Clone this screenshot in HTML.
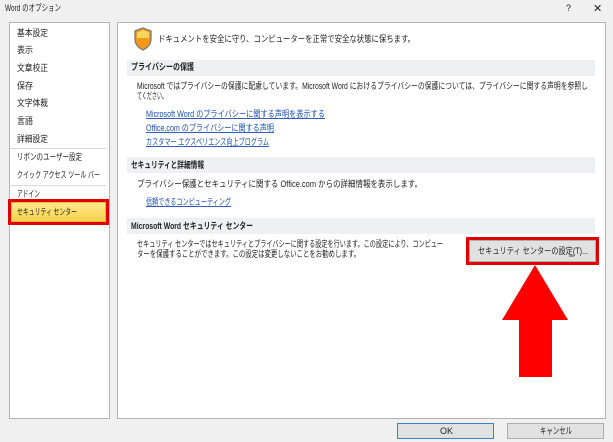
<!DOCTYPE html>
<html><head><meta charset="utf-8"><style>
*{margin:0;padding:0;box-sizing:border-box}
body{width:613px;height:442px;background:#f0f0f0;font-family:"Liberation Sans","Noto Sans CJK JP",sans-serif;position:relative;overflow:hidden}
.box{position:absolute}
svg text{font-family:"Liberation Sans","Noto Sans CJK JP",sans-serif;font-size:9px;fill:#222}
.l{fill:#1a4fb4;text-decoration:underline}
.b{font-weight:bold}
</style></head><body>
<div class="box" style="left:9px;top:22px;width:101px;height:397px;background:#fff;border:1px solid #b5b5b5"></div>
<div class="box" style="left:117px;top:22px;width:489px;height:397px;background:#fff;border:1px solid #b5b5b5"></div>
<div class="box" style="left:10px;top:148px;width:96px;height:1px;background:#d8d8d8"></div>
<div class="box" style="left:10px;top:185px;width:96px;height:1px;background:#d8d8d8"></div>
<div class="box" style="left:8px;top:199px;width:101px;height:26px;border:3px solid #e00000"></div>
<div class="box" style="left:11px;top:202px;width:95px;height:20px;background:linear-gradient(#fde98a,#f9d24a);border:1px solid #e6b840"></div>
<div class="box" style="left:127px;top:60px;width:468px;height:16px;background:#eef0f3"></div>
<div class="box" style="left:127px;top:157px;width:468px;height:16px;background:#eef0f3"></div>
<div class="box" style="left:127px;top:218px;width:468px;height:16px;background:#eef0f3"></div>
<div class="box" style="left:466px;top:237px;width:133px;height:28px;border:3px solid #e00000"></div>
<div class="box" style="left:469px;top:240px;width:127px;height:22px;background:#e1e1e1;border:1px solid #adadad"></div>
<div class="box" style="left:397px;top:423px;width:97px;height:16px;background:#e1e1e1;border:1px solid #3c7fd0"></div>
<div class="box" style="left:507px;top:423px;width:97px;height:16px;background:#e1e1e1;border:1px solid #adadad"></div>
<svg class="box" style="left:0;top:0" width="613" height="442">
<path d="M143 28 L151 31 L151 39 Q151 46 143 50 Q135 46 135 39 L135 31 Z" fill="#f39a1a" stroke="#7a7a7a" stroke-width="1.3"/>
<path d="M143 30 L149 32.5 L149 38 L137 38 L137 32.5Z" fill="#fbd55a"/>
<path d="M535 265 L568 320 L552 320 L552 377 L519 377 L519 320 L502 320 Z" fill="#ff0000"/>
<text x="5" y="11" textLength="56" lengthAdjust="spacingAndGlyphs">Word のオプション</text>
<text x="566" y="11">?</text>
<text x="593" y="12" style="font-size:11px">✕</text>
<text x="17" y="36" textLength="31" lengthAdjust="spacingAndGlyphs">基本設定</text>
<text x="17" y="53" textLength="16" lengthAdjust="spacingAndGlyphs">表示</text>
<text x="17" y="71" textLength="31" lengthAdjust="spacingAndGlyphs">文章校正</text>
<text x="17" y="89" textLength="16" lengthAdjust="spacingAndGlyphs">保存</text>
<text x="17" y="106" textLength="31" lengthAdjust="spacingAndGlyphs">文字体裁</text>
<text x="17" y="124" textLength="16" lengthAdjust="spacingAndGlyphs">言語</text>
<text x="17" y="142" textLength="31" lengthAdjust="spacingAndGlyphs">詳細設定</text>
<text x="17" y="160" textLength="65" lengthAdjust="spacingAndGlyphs">リボンのユーザー設定</text>
<text x="17" y="178" textLength="83" lengthAdjust="spacingAndGlyphs">クイック アクセス ツール バー</text>
<text x="17" y="197" textLength="23" lengthAdjust="spacingAndGlyphs">アドイン</text>
<text x="17" y="215" textLength="60" lengthAdjust="spacingAndGlyphs">セキュリティ センター</text>
<text x="158" y="42" textLength="257" lengthAdjust="spacingAndGlyphs">ドキュメントを安全に守り、コンピューターを正常で安全な状態に保ちます。</text>
<text class="b" x="131" y="70" textLength="63" lengthAdjust="spacingAndGlyphs">プライバシーの保護</text>
<text x="137" y="89" textLength="451" lengthAdjust="spacingAndGlyphs">Microsoft ではプライバシーの保護に配慮しています。Microsoft Word におけるプライバシーの保護については、プライバシーに関する声明を参照し</text>
<text x="137" y="99" textLength="30" lengthAdjust="spacingAndGlyphs">てください。</text>
<text class="l" x="146" y="117" textLength="179" lengthAdjust="spacingAndGlyphs">Microsoft Word のプライバシーに関する声明を表示する</text>
<text class="l" x="146" y="131" textLength="128" lengthAdjust="spacingAndGlyphs">Office.com のプライバシーに関する声明</text>
<text class="l" x="146" y="145" textLength="123" lengthAdjust="spacingAndGlyphs">カスタマー エクスペリエンス向上プログラム</text>
<text class="b" x="131" y="168" textLength="73" lengthAdjust="spacingAndGlyphs">セキュリティと詳細情報</text>
<text x="137" y="187" textLength="285" lengthAdjust="spacingAndGlyphs">プライバシー保護とセキュリティに関する Office.com からの詳細情報を表示します。</text>
<text class="l" x="146" y="205" textLength="85" lengthAdjust="spacingAndGlyphs">信頼できるコンピューティング</text>
<text class="b" x="131" y="229" textLength="122" lengthAdjust="spacingAndGlyphs">Microsoft Word セキュリティ センター</text>
<text x="137" y="247" textLength="306" lengthAdjust="spacingAndGlyphs">セキュリティ センターではセキュリティとプライバシーに関する設定を行います。この設定により、コンピュー</text>
<text x="137" y="257" textLength="223" lengthAdjust="spacingAndGlyphs">ターを保護することができます。この設定は変更しないことをお勧めします。</text>
<text x="478" y="254" textLength="110" lengthAdjust="spacingAndGlyphs">セキュリティ センターの設定(T)...</text>
<line x1="569" y1="256" x2="574" y2="256" stroke="#222" stroke-width="0.8"/>
<text x="440" y="434">OK</text>
<text x="540" y="434" textLength="32" lengthAdjust="spacingAndGlyphs">キャンセル</text>
</svg>
</body></html>
